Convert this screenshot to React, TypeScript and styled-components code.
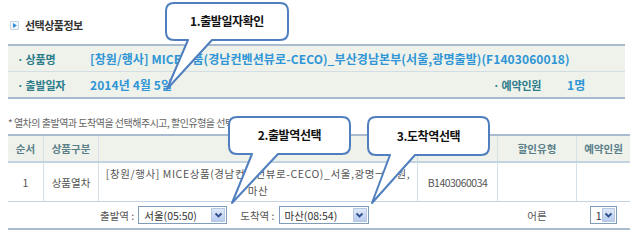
import React, { FC, ReactNode } from "react"
import styled, { createGlobalStyle } from "styled-components"

const GlobalStyle = createGlobalStyle`
  html, body {
    margin: 0;
    padding: 0;
    background: #fff;
  }
  body {
    font-family: "Noto Sans CJK KR", "Noto Sans", sans-serif;
    color: #555;
  }
`

const Page = styled.div`
  position: relative;
  width: 643px;
  height: 248px;
  box-sizing: border-box;
  padding: 14px 18px 0 8px;
  overflow: hidden;
`

const TitleRow = styled.div`
  display: flex;
  align-items: center;
  gap: 6px;
  height: 22px;
  padding-left: 2px;
`

const TitleIcon = styled.span`
  width: 7px;
  height: 7px;
  border: 1px solid #c4d3e2;
  border-radius: 1px;
  background: #f3f7fb;
  display: flex;
  align-items: center;
  justify-content: center;
`

const TitleText = styled.h2`
  margin: 0;
  font-size: 11px;
  font-weight: 700;
  color: #333;
  letter-spacing: -0.5px;
`

const InfoBox = styled.div`
  margin-top: 8px;
  display: grid;
  grid-template-columns: 82px 394px 83px 1fr;
  background: #eef2ea;
  border-top: 2px solid #a9bccf;
  border-bottom: 2px solid #a9bccf;
`

const InfoCell = styled.div<{ $span?: number; $label?: boolean; $line?: boolean }>`
  grid-column: span ${p => p.$span || 1};
  height: 25px;
  display: flex;
  align-items: center;
  padding-left: ${p => (p.$label ? "9px" : "0")};
  font-size: ${p => (p.$label ? "11px" : "12px")};
  font-weight: 700;
  color: ${p => (p.$label ? "#2c7c8c" : "#2f95d6")};
  border-bottom: ${p => (p.$line ? "1px solid #d3dde4" : "none")};
  white-space: nowrap;
  letter-spacing: ${p => (p.$label ? "-0.2px" : "0.1px")};
`

const Note = styled.p`
  margin: 17px 0 0;
  height: 14px;
  line-height: 14px;
  font-size: 10px;
  color: #666;
  white-space: nowrap;
  letter-spacing: -0.5px;
`

const Table = styled.table`
  margin-top: 4px;
  width: 617px;
  border-collapse: collapse;
  table-layout: fixed;
  border-top: 2px solid #a9bccf;
  border-bottom: 2px solid #a9bccf;
  font-size: 10.5px;
`

const Th = styled.th<{ $w: number }>`
  width: ${p => p.$w}px;
  height: 25px;
  padding: 0;
  background: #eef2ea;
  color: #5b7f8a;
  font-weight: 700;
  border-bottom: 2px solid #c3d2e0;
  border-left: 1px solid #d6e0e8;
  &:first-child {
    border-left: none;
  }
`

const Td = styled.td<{ $spacing?: number }>`
  height: 38px;
  padding: 0;
  text-align: center;
  color: #555;
  line-height: 17px;
  letter-spacing: ${p => p.$spacing || 0}px;
  border-left: 1px solid #d6e0e8;
  border-bottom: 1px solid #c6d4e1;
  &:first-child {
    border-left: none;
  }
`

const PickTd = styled.td`
  height: 26px;
  padding: 0;
  text-align: center;
  color: #555;
`

const StationRow = styled.div`
  display: flex;
  align-items: center;
  padding-left: 92px;
`

const StationLabel = styled.span<{ $gap: number }>`
  margin-left: ${p => p.$gap}px;
  margin-right: 4px;
  white-space: nowrap;
`

const SelectBox = styled.div<{ $w: number; $center?: boolean }>`
  width: ${p => p.$w}px;
  height: 18px;
  box-sizing: border-box;
  border: 1px solid #7f9db9;
  background: #fff;
  display: flex;
  align-items: center;
  justify-content: space-between;
  padding: 0 1px 0 5px;
  color: #333;
  font-size: 10.5px;
  margin: ${p => (p.$center ? "0 auto" : "0")};
`

const DropButton = styled.span`
  width: 14px;
  height: 14px;
  box-sizing: border-box;
  border: 1px solid #b7c8e6;
  background: linear-gradient(#dfe8f8, #b9cbee);
  display: flex;
  align-items: center;
  justify-content: center;
`

const Select: FC<{ w: number; value: string; center?: boolean }> = ({ w, value, center }) => (
  <SelectBox $w={w} $center={center}>
    <span>{value}</span>
    <DropButton>
      <svg width="9" height="7" viewBox="0 0 9 7">
        <polyline points="1.5,1.5 4.5,4.5 7.5,1.5" fill="none" stroke="#2c4f8c" strokeWidth="1.8" />
      </svg>
    </DropButton>
  </SelectBox>
)

const CalloutWrap = styled.div<{ $x: number; $y: number; $w: number; $h: number }>`
  position: absolute;
  left: ${p => p.$x}px;
  top: ${p => p.$y}px;
  width: ${p => p.$w}px;
  height: ${p => p.$h}px;
  pointer-events: none;
`

const CalloutShape = styled.svg`
  position: absolute;
  left: -2px;
  top: -2px;
  overflow: visible;
`

const CalloutText = styled.div`
  position: absolute;
  inset: 0 0 2px 0;
  display: flex;
  align-items: center;
  justify-content: center;
  font-size: 12px;
  font-weight: 700;
  color: #111;
  letter-spacing: -0.4px;
`

interface CalloutProps {
  x: number
  y: number
  w: number
  h: number
  base: [number, number]
  tip: [number, number]
  children: ReactNode
}

const Callout: FC<CalloutProps> = ({ x, y, w, h, base, tip, children }) => {
  const r = 8
  const d = `M${r},0 H${w - r} Q${w},0 ${w},${r} V${h - r} Q${w},${h} ${w - r},${h} H${base[1]} L${tip[0]},${tip[1]} L${base[0]},${h} H${r} Q0,${h} 0,${h - r} V${r} Q0,0 ${r},0 Z`
  return (
    <CalloutWrap $x={x} $y={y} $w={w} $h={h}>
      <CalloutShape width={w + 4} height={tip[1] + 4}>
        <g transform="translate(2,2)">
          <path d={d} fill="#fff" stroke="#4f7fbf" strokeWidth="2" strokeLinejoin="round" />
        </g>
      </CalloutShape>
      <CalloutText>{children}</CalloutText>
    </CalloutWrap>
  )
}

const App: FC = () => {
  return (
    <Page>
      <GlobalStyle />
      <TitleRow>
        <TitleIcon>
          <svg width="4" height="5" viewBox="0 0 4 5">
            <polygon points="0,0 4,2.5 0,5" fill="#2f8fd6" />
          </svg>
        </TitleIcon>
        <TitleText>선택상품정보</TitleText>
      </TitleRow>

      <InfoBox>
        <InfoCell $label $line>· 상품명</InfoCell>
        <InfoCell $span={3} $line>
          [창원/행사] MICE상품(경남컨벤션뷰로-CECO)_부산경남본부(서울,광명출발)(F1403060018)
        </InfoCell>
        <InfoCell $label>· 출발일자</InfoCell>
        <InfoCell>2014년 4월 5일</InfoCell>
        <InfoCell $label>· 예약인원</InfoCell>
        <InfoCell>1명</InfoCell>
      </InfoBox>

      <Note>* 열차의 출발역과 도착역을 선택해주시고, 할인유형을 선택해주세요.</Note>

      <Table>
        <thead>
          <tr>
            <Th $w={35}>순서</Th>
            <Th $w={54}>상품구분</Th>
            <Th $w={318}>상품명</Th>
            <Th $w={79}>열차번호</Th>
            <Th $w={78}>할인유형</Th>
            <Th $w={53}>예약인원</Th>
          </tr>
        </thead>
        <tbody>
          <tr>
            <Td>1</Td>
            <Td>상품열차</Td>
            <Td $spacing={0.6}>
              [창원/행사] MICE상품(경남컨벤션뷰로-CECO)_서울,광명→창원,
              <br />
              마산
            </Td>
            <Td $spacing={-0.5}>B1403060034</Td>
            <Td />
            <Td />
          </tr>
          <tr>
            <PickTd colSpan={4}>
              <StationRow>
                <StationLabel $gap={0}>출발역 :</StationLabel>
                <Select w={89} value="서울(05:50)" />
                <StationLabel $gap={13}>도착역 :</StationLabel>
                <Select w={90} value="마산(08:54)" />
              </StationRow>
            </PickTd>
            <PickTd>어른</PickTd>
            <PickTd>
              <Select w={27} value="1" center />
            </PickTd>
          </tr>
        </tbody>
      </Table>

      <Callout x={166} y={3} w={122} h={37} base={[22, 46]} tip={[1, 86]}>
        1.출발일자확인
      </Callout>
      <Callout x={229} y={117} w={121} h={37} base={[23, 49]} tip={[3, 86]}>
        2.출발역선택
      </Callout>
      <Callout x={368} y={117} w={121} h={38} base={[22, 47]} tip={[4, 86]}>
        3.도착역선택
      </Callout>
    </Page>
  )
}

export default App
